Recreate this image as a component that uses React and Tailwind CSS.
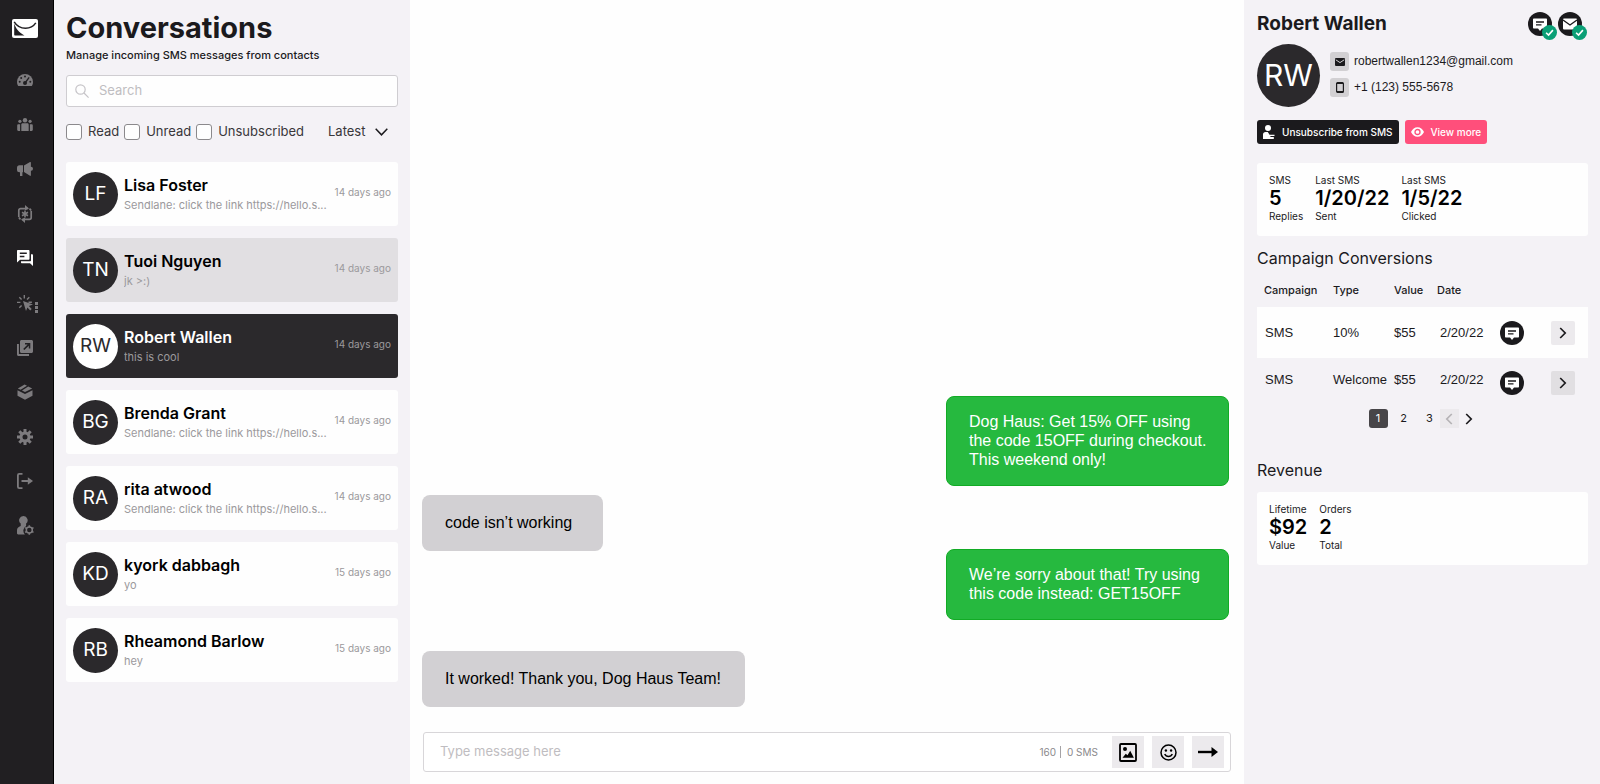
import React, { useState } from 'react';

const CONTACTS = [
  { initials: 'LF', name: 'Lisa Foster', preview: 'Sendlane: click the link https://hello.s...', time: '14 days ago' },
  { initials: 'TN', name: 'Tuoi Nguyen', preview: 'jk >:)', time: '14 days ago', hovered: true },
  { initials: 'RW', name: 'Robert Wallen', preview: 'this is cool', time: '14 days ago' },
  { initials: 'BG', name: 'Brenda Grant', preview: 'Sendlane: click the link https://hello.s...', time: '14 days ago' },
  { initials: 'RA', name: 'rita atwood', preview: 'Sendlane: click the link https://hello.s...', time: '14 days ago' },
  { initials: 'KD', name: 'kyork dabbagh', preview: 'yo', time: '15 days ago' },
  { initials: 'RB', name: 'Rheamond Barlow', preview: 'hey', time: '15 days ago' },
];

const CONVERSIONS = [
  { campaign: 'SMS', type: '10%', value: '$55', date: '2/20/22' },
  { campaign: 'SMS', type: 'Welcome', value: '$55', date: '2/20/22' },
];

const NAV_ITEMS = [
  {
    label: 'Dashboard',
    icon: (
      <svg viewBox="0 0 16 16" className="size-4" fill="currentColor">
        <path d="M8 2a8 8 0 0 0-8 8c0 1.400.4 2.700 1 3.800.2.200.4.200.6.200h12.800c.2 0 .4 0 .6-.2.600-1.100 1-2.400 1-3.800a8 8 0 0 0-8-8z" />
        <g fill="#211f22">
          <circle cx="8" cy="4.500" r="1" />
          <circle cx="4.200" cy="6" r="1" />
          <circle cx="2.700" cy="9.800" r="1" />
          <circle cx="13.300" cy="9.800" r="1" />
          <circle cx="8" cy="11" r="2" />
        </g>
        <path d="M8 11l3.800-5.200" stroke="#211f22" strokeWidth="1.300" strokeLinecap="round" />
      </svg>
    ),
  },
  {
    label: 'Audience',
    icon: (
      <svg viewBox="0 0 16 16" className="size-4" fill="currentColor">
        <circle cx="8" cy="3.200" r="2.200" />
        <circle cx="2.900" cy="4.300" r="1.600" />
        <circle cx="13.100" cy="4.300" r="1.600" />
        <path d="M4.300 7.700c0-.8.600-1.400 1.400-1.400h4.600c.8 0 1.400.6 1.400 1.400V14H4.300z" />
        <path d="M.2 8.500c0-.7.500-1.200 1.200-1.200h1.700V14H1.400C.7 14 .2 13.500.2 12.800zM15.800 8.500c0-.7-.5-1.200-1.200-1.200h-1.700V14h1.700c.7 0 1.200-.5 1.200-1.200z" />
      </svg>
    ),
  },
  {
    label: 'Campaigns',
    icon: (
      <svg viewBox="0 0 16 16" className="size-4" fill="currentColor">
        <path d="M2.500 4.200H6v7h-.6V15H3V11.200h-.5A2.500 2.500 0 0 1 0 8.700v-2a2.500 2.500 0 0 1 2.500-2.500z" />
        <path d="M7 4.600L13 1c.5-.2.900 0 .9.500V6a2 2 0 0 1 0 3.600v4.700c0 .5-.4.700-.9.500L7 11z" />
        <circle cx="14" cy="7.800" r="2" />
      </svg>
    ),
  },
  {
    label: 'Automations',
    icon: (
      <svg viewBox="0 0 16 18" className="h-[18px] w-4" fill="none" stroke="currentColor" strokeWidth="1.700">
        <path d="M1.800 12V5.400c0-1 .8-1.800 1.800-1.800h7M14.200 6v6.600c0 1-.8 1.800-1.800 1.800h-7M1.800 12.500l1.700 1.900M14.200 5.500l-1.700-1.900" />
        <path d="M8 0l4 3.600-4 1.600zM8 18l-4-3.600 4-1.600z" fill="currentColor" stroke="none" />
        <path d="M8 5.600v6.800M5 7.300l6 3.400M5 10.700l6-3.400" strokeWidth="1.600" />
      </svg>
    ),
  },
  {
    label: 'Conversations',
    active: true,
    icon: (
      <svg viewBox="0 0 16 16" className="size-4" fill="currentColor">
        <path fillRule="evenodd" d="M1 0h10.500c.6 0 1 .4 1 1v7.800c0 .6-.4 1-1 1H3L0 12.600V1c0-.6.400-1 1-1zm1.800 2.600V4h7V2.600zm0 3.200v1.400h4.600V5.800z" />
        <path d="M14 4.300h1c.6 0 1 .4 1 1V16l-3-2.800H5c-.6 0-1-.4-1-1v-1h9.200c.5 0 .8-.3.800-.8z" />
      </svg>
    ),
  },
  {
    label: 'Forms',
    more: true,
    icon: (
      <svg viewBox="0 0 16 16" className="size-4" fill="currentColor">
        <path d="M6 6l10 3.400-4.100 1.700 2.800 2.800-1.500 1.500-2.800-2.800L9 16z" />
        <path d="M7.300 0v3.400M2.300 2.300l2.300 2.300M0 7.400h3.400M2.300 12.800l2.300-2.300M12.300 2.300L10 4.600M11.500 7.200h3.400" stroke="currentColor" strokeWidth="1.400" />
      </svg>
    ),
  },
  {
    label: 'Landing pages',
    icon: (
      <svg viewBox="0 0 16 16" className="size-4" fill="currentColor">
        <path d="M0 4h1.900v10.100H12V16H1.500C.7 16 0 15.300 0 14.500z" />
        <path fillRule="evenodd" d="M4.500 0h10c.8 0 1.500.7 1.500 1.500v10c0 .8-.7 1.500-1.500 1.500h-10C3.700 13 3 12.300 3 11.500v-10C3 .7 3.700 0 4.500 0zM8 3v1.500h2.600L6.200 8.900l1.200 1.200 4.400-4.400v2.700h1.500V3z" />
      </svg>
    ),
  },
  {
    label: 'Products',
    icon: (
      <svg viewBox="0 0 16 16" className="size-4" fill="currentColor">
        <path d="M.8 4.400L7.600.6 10 1.800 3.600 5.700zM11.200 2.400l4 2L8 8 5 6.500z" />
        <path d="M.5 6.200L8 10l7.500-3.800v5.600L8 15.800.5 11.800z" />
      </svg>
    ),
  },
  {
    label: 'Settings',
    icon: (
      <svg viewBox="0 0 16 16" className="size-4" fill="none" stroke="currentColor">
        <circle cx="8" cy="8" r="4" strokeWidth="3" />
        <path d="M8 0v3.500M8 12.500V16M0 8h3.500M12.500 8H16M2.300 2.300l2.500 2.500M11.200 11.200l2.500 2.500M13.700 2.300l-2.500 2.500M4.800 11.200l-2.500 2.500" strokeWidth="3" />
      </svg>
    ),
  },
  {
    label: 'Log out',
    icon: (
      <svg viewBox="0 0 16 16" className="size-4" fill="none" stroke="currentColor" strokeWidth="1.800">
        <path d="M5.500.9H2.200c-.7 0-1.300.6-1.300 1.300v11.600c0 .7.600 1.300 1.300 1.300h3.300M4.500 8H12" />
        <path d="M10.800 4.300L16 8l-5.200 3.700z" fill="currentColor" stroke="none" />
      </svg>
    ),
  },
  {
    label: 'Account',
    icon: (
      <svg viewBox="0 0 17 19" className="h-[19px] w-[17px]" fill="currentColor">
        <path d="M6.500 0a4.300 4.300 0 0 1 2.600 7.600v2.300a5.500 5.500 0 0 0-1.200 8.600H1.200C.5 18.500 0 18 0 17.300v-3c0-1.900 1.300-3.400 3.700-4.200V7.600A4.300 4.300 0 0 1 6.500 0z" />
        <g fill="none" stroke="currentColor">
          <circle cx="12.300" cy="14" r="3" strokeWidth="1.500" />
          <path d="M12.300 9.200v2M12.300 16.800v2M8.100 11.600l1.800 1M14.700 15.400l1.800 1M8.100 16.400l1.800-1M14.700 12.600l1.800-1" strokeWidth="1.600" />
        </g>
      </svg>
    ),
  },
];

function Logo() {
  return (
    <svg viewBox="0 0 26 19" className="h-[19px] w-[26px]">
      <rect width="26" height="19" rx="2" fill="#fff" />
      <path d="M2.200 2.800C5 7.400 9 9.200 13.500 9.200c4.300 0 7.800-1.700 10.300-5.400" fill="none" stroke="#211f22" strokeWidth="1.500" />
      <path d="M2.200 4.500c1.500 4.800 4.800 9.200 10.300 11.900H3.200c-.6 0-1-.4-1-1z" fill="#211f22" />
    </svg>
  );
}

function SmsBadge() {
  return (
    <svg viewBox="0 0 24 24" className="block size-6" role="img" aria-label="SMS">
      <circle cx="12" cy="12" r="12" fill="#1b1a1d" />
      <path d="M6 6.500h12c.6 0 1 .4 1 1v8c0 .6-.4 1-1 1h-4L12 19l-2-2.500H6c-.6 0-1-.4-1-1v-8c0-.6.400-1 1-1z" fill="#fff" />
      <path d="M8 10h8M8 12.800h5.500" stroke="#1b1a1d" strokeWidth="1.300" />
    </svg>
  );
}

function MailBadge() {
  return (
    <svg viewBox="0 0 24 24" className="block size-6" role="img" aria-label="Email">
      <circle cx="12" cy="12" r="12" fill="#1b1a1d" />
      <rect x="5" y="6.500" width="14" height="11" rx="1" fill="#fff" />
      <path d="M5 8l7 5 7-5" fill="none" stroke="#1b1a1d" strokeWidth="1.400" />
    </svg>
  );
}

function Verified({ children }) {
  return (
    <span className="relative">
      {children}
      <svg viewBox="0 0 14 14" className="absolute -right-[5px] top-[13px] size-[15px]">
        <circle cx="7" cy="7" r="7" fill="#0a9f76" />
        <path d="M3.800 7.200l2.300 2.200 4.100-4.600" fill="none" stroke="#fff" strokeWidth="1.500" />
      </svg>
    </span>
  );
}

function Chevron({ left = false }) {
  return (
    <svg viewBox="0 0 8 12" className="h-3 w-2" fill="none" stroke="currentColor" strokeWidth="1.700">
      <path d={left ? 'M6.800 1L1.800 6l5 5' : 'M1.200 1l5 5-5 5'} />
    </svg>
  );
}

function Sidebar() {
  return (
    <aside className="flex w-[54px] shrink-0 flex-col items-center border-r border-black bg-[#211f22] pt-[19px] pr-[3px]">
      <a href="#home" aria-label="Home"><Logo /></a>
      <nav className="mt-[33px] flex h-[464px] flex-col justify-between">
        {NAV_ITEMS.map((item) => (
          <a
            key={item.label}
            href="#nav"
            aria-label={item.label}
            className={`relative flex h-[18px] items-center justify-center ${item.active ? 'text-white' : 'text-[#7d7b7e]'}`}
          >
            {item.icon}
            {item.more && (
              <span className="absolute -right-1 top-2 flex flex-col gap-px">
                <span className="size-[3px] bg-current" />
                <span className="size-[3px] bg-current" />
                <span className="size-[3px] bg-current" />
              </span>
            )}
          </a>
        ))}
      </nav>
    </aside>
  );
}

function Filter({ label }) {
  return (
    <label className="flex items-center gap-[6px] text-[13px]">
      <input type="checkbox" className="size-4 appearance-none rounded-[3px] border border-[#8b898c] bg-[#fefefe] checked:bg-[#2b292c]" />
      {label}
    </label>
  );
}

function ContactCard({ contact, selected, onSelect }) {
  let cardClass = 'bg-[#fefefe] text-black';
  if (contact.hovered) cardClass = 'bg-[#e1dfe2] text-black';
  if (selected) cardClass = 'bg-[#2b292c] text-white';

  return (
    <button onClick={onSelect} className={`flex h-16 w-full items-center gap-[6px] rounded-[3px] px-[7px] text-left ${cardClass}`}>
      <span className={`flex size-[45px] shrink-0 items-center justify-center rounded-full text-[19px] ${selected ? 'bg-white text-[#2b292c]' : 'bg-[#2b292c] text-white'}`}>
        {contact.initials}
      </span>
      <span className="min-w-0 flex-1 pt-[2px]">
        <span className="block truncate text-base leading-5 font-semibold">{contact.name}</span>
        <span className="block truncate text-[11px] leading-5 text-[#9b999c]">{contact.preview}</span>
      </span>
      <span className="pb-1 text-[10px] text-[#9b999c]">{contact.time}</span>
    </button>
  );
}

function ConversationList() {
  const [selected, setSelected] = useState('Robert Wallen');

  return (
    <section className="w-[356px] shrink-0 bg-[#f4f2f6] px-3 pt-[10px]">
      <h1 className="text-[29px] leading-9 font-bold text-[#1b1a1d]">Conversations</h1>
      <p className="text-[11px] leading-[18px] font-medium">Manage incoming SMS messages from contacts</p>

      {/* Search */}
      <div className="mt-[11px] flex h-8 items-center gap-[10px] rounded-[3px] border border-[#cfcdd1] bg-[#fefefe] px-2">
        <svg viewBox="0 0 14 14" className="size-[14px] shrink-0" fill="none" stroke="#c6c4c8" strokeWidth="1.200">
          <circle cx="5.500" cy="5.500" r="4.700" />
          <path d="M9 9l4.600 4.600" />
        </svg>
        <input type="search" aria-label="Search" placeholder="Search" className="min-w-0 flex-1 text-[13px] outline-none placeholder:text-[#bfbdc1]" />
      </div>

      {/* Filters */}
      <div className="mt-4 flex h-[18px] items-center justify-between pr-[10px] text-[#39373a]">
        <div className="flex gap-[5px]">
          <Filter label="Read" />
          <Filter label="Unread" />
          <Filter label="Unsubscribed" />
        </div>
        <div className="relative flex items-center">
          <select aria-label="Sort order" className="w-[60px] appearance-none text-[13px] outline-none">
            <option>Latest</option>
            <option>Oldest</option>
          </select>
          <svg viewBox="0 0 13 8" className="pointer-events-none absolute right-0 h-2 w-[13px]" fill="none" stroke="#1b1a1d" strokeWidth="1.500">
            <path d="M.7.800l5.800 6 5.800-6" />
          </svg>
        </div>
      </div>

      <div className="mt-[21px] flex flex-col gap-3">
        {CONTACTS.map((contact) => (
          <ContactCard
            key={contact.name}
            contact={contact}
            selected={contact.name === selected}
            onSelect={() => setSelected(contact.name)}
          />
        ))}
      </div>
    </section>
  );
}

function Chat() {
  return (
    <main className="flex min-w-0 flex-1 flex-col justify-end bg-[#fefefe] px-3 pb-3">
      <div className="flex flex-col items-start font-['Liberation_Sans',sans-serif] text-base leading-[19px] text-black">
        <p className="mr-[3px] w-[283px] self-end rounded-lg border border-[#12ab25] bg-[#26b93f] pt-[15px] pr-4 pb-4 pl-[22px] text-white">
          Dog Haus: Get 15% OFF using the code 15OFF during checkout. This weekend only!
        </p>
        <p className="mt-[9px] rounded-lg bg-[#d2d0d3] pt-[18px] pr-[31px] pb-[19px] pl-[23px]">code isn’t working</p>
        <p className="-mt-[2px] mr-[3px] w-[283px] self-end rounded-lg border border-[#12ab25] bg-[#26b93f] pt-[15px] pr-4 pb-4 pl-[22px] text-white">
          We’re sorry about that! Try using this code instead: GET15OFF
        </p>
        <p className="mt-[31px] rounded-lg bg-[#d2d0d3] pt-[18px] pr-6 pb-[19px] pl-[23px]">It worked! Thank you, Dog Haus Team!</p>
      </div>

      {/* Composer */}
      <form className="mt-[25px] mr-px ml-px flex h-10 items-center gap-2 rounded-[3px] border border-[#d8d6d9] bg-white pr-[6px] pl-4" onSubmit={(e) => e.preventDefault()}>
        <input type="text" aria-label="Message" placeholder="Type message here" className="min-w-0 flex-1 text-[13px] outline-none placeholder:text-[#bfbdc1]" />
        <span className="mr-[6px] flex items-center gap-[6px] text-[10px] text-[#8b898c]">
          <span className="border-r border-[#a5a3a6] pr-1 leading-3">160</span>
          <span className="leading-3">0 SMS</span>
        </span>
        <button type="button" aria-label="Add image" className="flex size-8 items-center justify-center bg-[#eceaed]">
          <svg viewBox="0 0 18 19" className="h-[19px] w-[18px]">
            <rect x="1" y="1" width="16" height="17" rx="1" fill="none" stroke="#000" strokeWidth="1.800" />
            <circle cx="6" cy="6" r="2" />
            <path d="M3.500 14.800l3.300-4 1.700 1.400 2.700-4.400 3.700 7z" />
          </svg>
        </button>
        <button type="button" aria-label="Add emoji" className="flex size-8 items-center justify-center bg-[#eceaed]">
          <svg viewBox="0 0 17 17" className="size-[17px]" fill="none" stroke="#000" strokeWidth="1.500">
            <circle cx="8.500" cy="8.500" r="7.500" />
            <path d="M4.700 10c.8 1.700 2.100 2.500 3.800 2.500s3-.8 3.800-2.500" />
            <circle cx="5.900" cy="6.500" r="1.200" fill="#000" stroke="none" />
            <circle cx="11.100" cy="6.500" r="1.200" fill="#000" stroke="none" />
          </svg>
        </button>
        <button type="submit" aria-label="Send" className="flex size-8 items-center justify-center bg-[#eceaed]">
          <svg viewBox="0 0 20 10" className="h-[10px] w-5">
            <path d="M0 5h15" stroke="#000" strokeWidth="2.400" />
            <path d="M13.500 0L20 5l-6.500 5z" />
          </svg>
        </button>
      </form>
    </main>
  );
}

function Stat({ top, value, bottom }) {
  return (
    <div className="text-[10px] leading-4 text-[#1b1a1d]">
      <div>{top}</div>
      <div className="text-xl leading-5 font-semibold text-black">{value}</div>
      <div>{bottom}</div>
    </div>
  );
}

function ContactDetails() {
  return (
    <aside className="w-[356px] shrink-0 bg-[#f4f2f6] pt-[10px] pr-3 pl-[13px]">
      <div className="flex items-start justify-between pt-[2px] pr-[6px]">
        <h2 className="text-[19px] leading-6 font-bold text-[#1b1a1d]">Robert Wallen</h2>
        <div className="flex gap-[6px]">
          <Verified><SmsBadge /></Verified>
          <Verified><MailBadge /></Verified>
        </div>
      </div>

      <div className="mt-2 flex items-start gap-[10px]">
        <div className="flex size-[63px] items-center justify-center rounded-full bg-[#2b292c] text-[30px] text-white">RW</div>
        <div className="flex flex-col gap-[7px] pt-2 font-['Liberation_Sans',sans-serif] text-xs leading-[19px]">
          <div className="flex gap-[5px]">
            <span className="flex size-[19px] items-center justify-center rounded-[3px] bg-[#d2d0d3]">
              <svg viewBox="0 0 10 8" className="h-2 w-[10px]">
                <rect width="10" height="8" rx="1" fill="#1b1a1d" />
                <path d="M.8 1.800L5 4.600l4.200-2.800" fill="none" stroke="#d2d0d3" />
              </svg>
            </span>
            <a href="mailto:robertwallen1234@gmail.com">robertwallen1234@gmail.com</a>
          </div>
          <div className="flex gap-[5px]">
            <span className="flex size-[19px] items-center justify-center rounded-[3px] bg-[#d2d0d3]">
              <svg viewBox="0 0 8 11" className="h-[11px] w-2">
                <rect x=".6" y=".6" width="6.800" height="9.800" rx="1" fill="none" stroke="#1b1a1d" strokeWidth="1.200" />
                <path d="M1 1.300h6M1 9.700h6" stroke="#1b1a1d" strokeWidth="1.400" />
              </svg>
            </span>
            <a href="tel:+11235555678">+1 (123) 555-5678</a>
          </div>
        </div>
      </div>

      <div className="mt-[13px] flex gap-[6px] text-[10px] font-medium text-white">
        <button className="flex h-6 items-center gap-[7px] rounded-[3px] bg-[#1b1a1d] px-[6px]">
          <svg viewBox="0 0 12 14" className="h-[14px] w-3" fill="#fff">
            <circle cx="5" cy="3" r="3" />
            <path d="M0 14V9.500C0 8 1 7 2.500 7h2.300l1.700 2.800h5v1.300H7.400V12h3.400v2z" />
          </svg>
          Unsubscribe from SMS
        </button>
        <button className="flex h-6 items-center gap-[7px] rounded-[3px] bg-[#ff4f7b] px-[6px]">
          <svg viewBox="0 0 13 10" className="h-[10px] w-[13px]">
            <path d="M0 5c1.500-3.200 3.700-4.800 6.500-4.800S11.500 1.800 13 5c-1.500 3.200-3.700 4.800-6.500 4.800S1.500 8.200 0 5z" fill="#fff" />
            <circle cx="6.500" cy="5" r="2.500" fill="none" stroke="#ff4f7b" strokeWidth="1.300" />
          </svg>
          View more
        </button>
      </div>

      <div className="mt-[19px] flex gap-3 rounded-[3px] bg-[#fefefe] px-3 pt-[9px] pb-3">
        <Stat top="SMS" value="5" bottom="Replies" />
        <Stat top="Last SMS" value="1/20/22" bottom="Sent" />
        <Stat top="Last SMS" value="1/5/22" bottom="Clicked" />
      </div>

      {/* Conversions */}
      <h3 className="mt-[10px] text-base leading-6">Campaign Conversions</h3>
      <table className="mt-1 w-full table-fixed text-left">
        <thead>
          <tr className="h-[33px] text-[11px]">
            <th className="w-[76px] pl-[7px] font-medium">Campaign</th>
            <th className="w-[61px] font-medium">Type</th>
            <th className="w-[43px] font-medium">Value</th>
            <th className="w-[63px] font-medium">Date</th>
            <th className="w-10" aria-label="Channel" />
            <th aria-label="Open" />
          </tr>
        </thead>
        <tbody className="font-['Liberation_Sans',sans-serif] text-[13px]">
          {CONVERSIONS.map((row, index) => (
            <tr key={row.type} className={index % 2 === 0 ? 'h-[51px] bg-[#fefefe]' : 'h-[49px] [&>.label]:pb-[6px]'}>
              <td className="label pl-2">{row.campaign}</td>
              <td className="label">{row.type}</td>
              <td className="label">{row.value}</td>
              <td className="label pl-[3px]">{row.date}</td>
              <td><SmsBadge /></td>
              <td className="pr-[13px]">
                <button aria-label="Open campaign" className={`ml-auto flex size-6 items-center justify-center rounded-[2px] ${index % 2 === 0 ? 'bg-[#eceaed]' : 'bg-[#e1dfe2]'}`}>
                  <Chevron />
                </button>
              </td>
            </tr>
          ))}
        </tbody>
      </table>

      <nav aria-label="Pagination" className="mt-[2px] flex items-center justify-center pr-1 text-[11px]">
        <button className="size-[19px] rounded-[3px] bg-[#474548] text-white">1</button>
        <button className="ml-[6px] w-5">2</button>
        <button className="ml-[6px] w-5">3</button>
        <button aria-label="Previous page" disabled className="flex size-[19px] items-center justify-center bg-[#eceaed] text-[#b5b3b6]">
          <Chevron left />
        </button>
        <button aria-label="Next page" className="ml-[6px]"><Chevron /></button>
      </nav>

      {/* Revenue */}
      <h3 className="mt-[30px] text-base leading-6">Revenue</h3>
      <div className="mt-[10px] flex gap-3 rounded-[3px] bg-[#fefefe] px-3 pt-[9px] pb-3">
        <Stat top="Lifetime" value="$92" bottom="Value" />
        <Stat top="Orders" value="2" bottom="Total" />
      </div>
    </aside>
  );
}

export default function App() {
  return (
    <div className="flex min-h-screen bg-[#fefefe] font-[Inter,sans-serif] text-[#1b1a1d]">
      <Sidebar />
      <ConversationList />
      <Chat />
      <ContactDetails />
    </div>
  );
}
